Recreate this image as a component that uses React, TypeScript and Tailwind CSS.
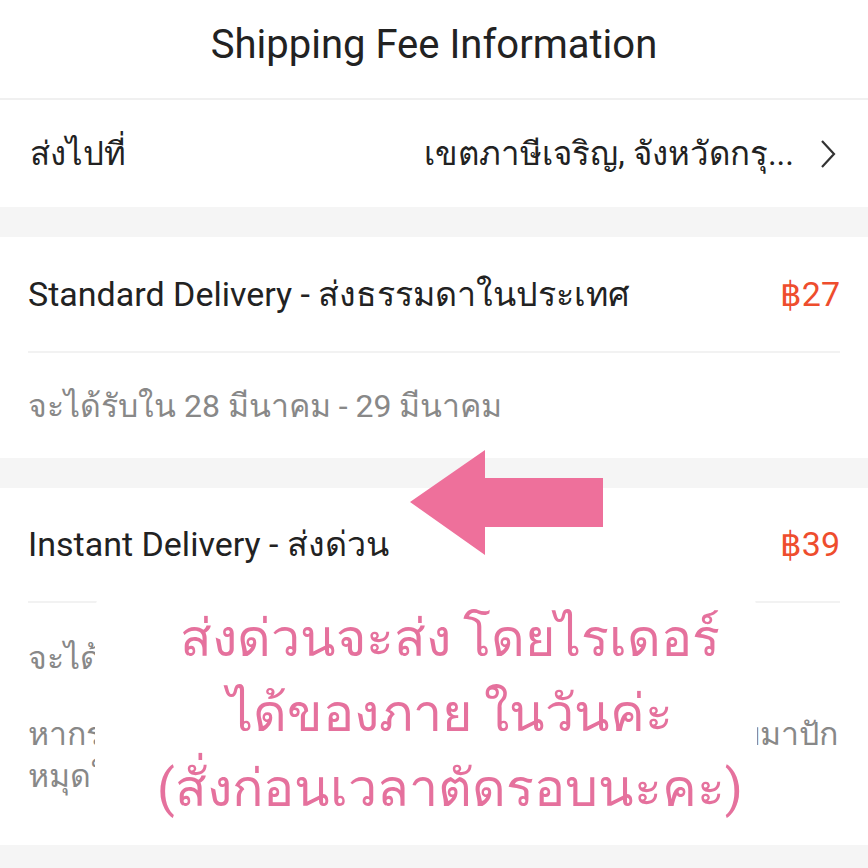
export default function App() {
  return (
    <div className="relative w-[868px] h-[868px] overflow-hidden bg-white text-[#222] font-['Roboto','Noto_Sans',sans-serif]">
      <header className="h-[100px] flex items-center justify-center pb-[8px] border-b-2 border-[#f0f0f0] text-[40px]">
        Shipping Fee Information
      </header>

      <div className="h-[107px] flex items-center justify-between pl-[30px] pr-[32px] text-[33px]">
        <span>ส่งไปที่</span>
        <div className="flex items-center gap-[26px]">
          <span>เขตภาษีเจริญ, จังหวัดกรุ...</span>
          <svg width="16" height="30" viewBox="0 0 16 30" fill="none" stroke="#333" strokeWidth="2.2">
            <path d="M2 2 L14 15 L2 28" />
          </svg>
        </div>
      </div>

      <div className="h-[30px] bg-[#f5f5f5]" />

      <section className="px-[28px]">
        <div className="h-[116px] flex items-center justify-between border-b-2 border-[#f2f2f2] text-[34px]">
          <span>Standard Delivery - ส่งธรรมดาในประเทศ</span>
          <span className="text-[#ee4d2d]">฿27</span>
        </div>
        <div className="h-[105px] flex items-center text-[32px] text-[#888]">
          จะได้รับใน 28 มีนาคม - 29 มีนาคม
        </div>
      </section>

      <div className="h-[30px] bg-[#f5f5f5]" />

      <section className="px-[28px]">
        <div className="h-[115px] flex items-center justify-between border-b-2 border-[#f2f2f2] text-[34px]">
          <span>Instant Delivery - ส่งด่วน</span>
          <span className="text-[#ee4d2d]">฿39</span>
        </div>
        <div className="h-[110px] flex items-center text-[32px] text-[#888]">
          จะได้รับภายใน 2 ชั่วโมง
        </div>
        <p className="text-[32px] leading-[42px] text-[#888] pb-[48px] whitespace-nowrap">
          หากระบบไม่พบที่อยู่ กรุณาตรวจสอบตำแหน่งแล้วกลับมาปัก
          <br />
          หมุดใหม่
        </p>
      </section>

      <div className="h-[30px] bg-[#f5f5f5]" />

      {/* pink arrow overlay */}
      <svg className="absolute left-[408px] top-[450px]" width="198" height="108" viewBox="0 0 198 108">
        <polygon points="2,52 77,0 77,28 195,28 195,77 77,77 77,105" fill="#ee709b" />
      </svg>

      {/* note overlay */}
      <div className="absolute left-[95px] top-[588px] w-[662px] h-[250px] rounded-[22px] bg-white flex flex-col items-center justify-center pl-[48px] text-[52px] leading-[75px] text-[#e5719d]">
        <span>ส่งด่วนจะส่ง โดยไรเดอร์</span>
        <span>ได้ของภาย ในวันค่ะ</span>
        <span>(สั่งก่อนเวลาตัดรอบนะคะ)</span>
      </div>
    </div>
  );
}
